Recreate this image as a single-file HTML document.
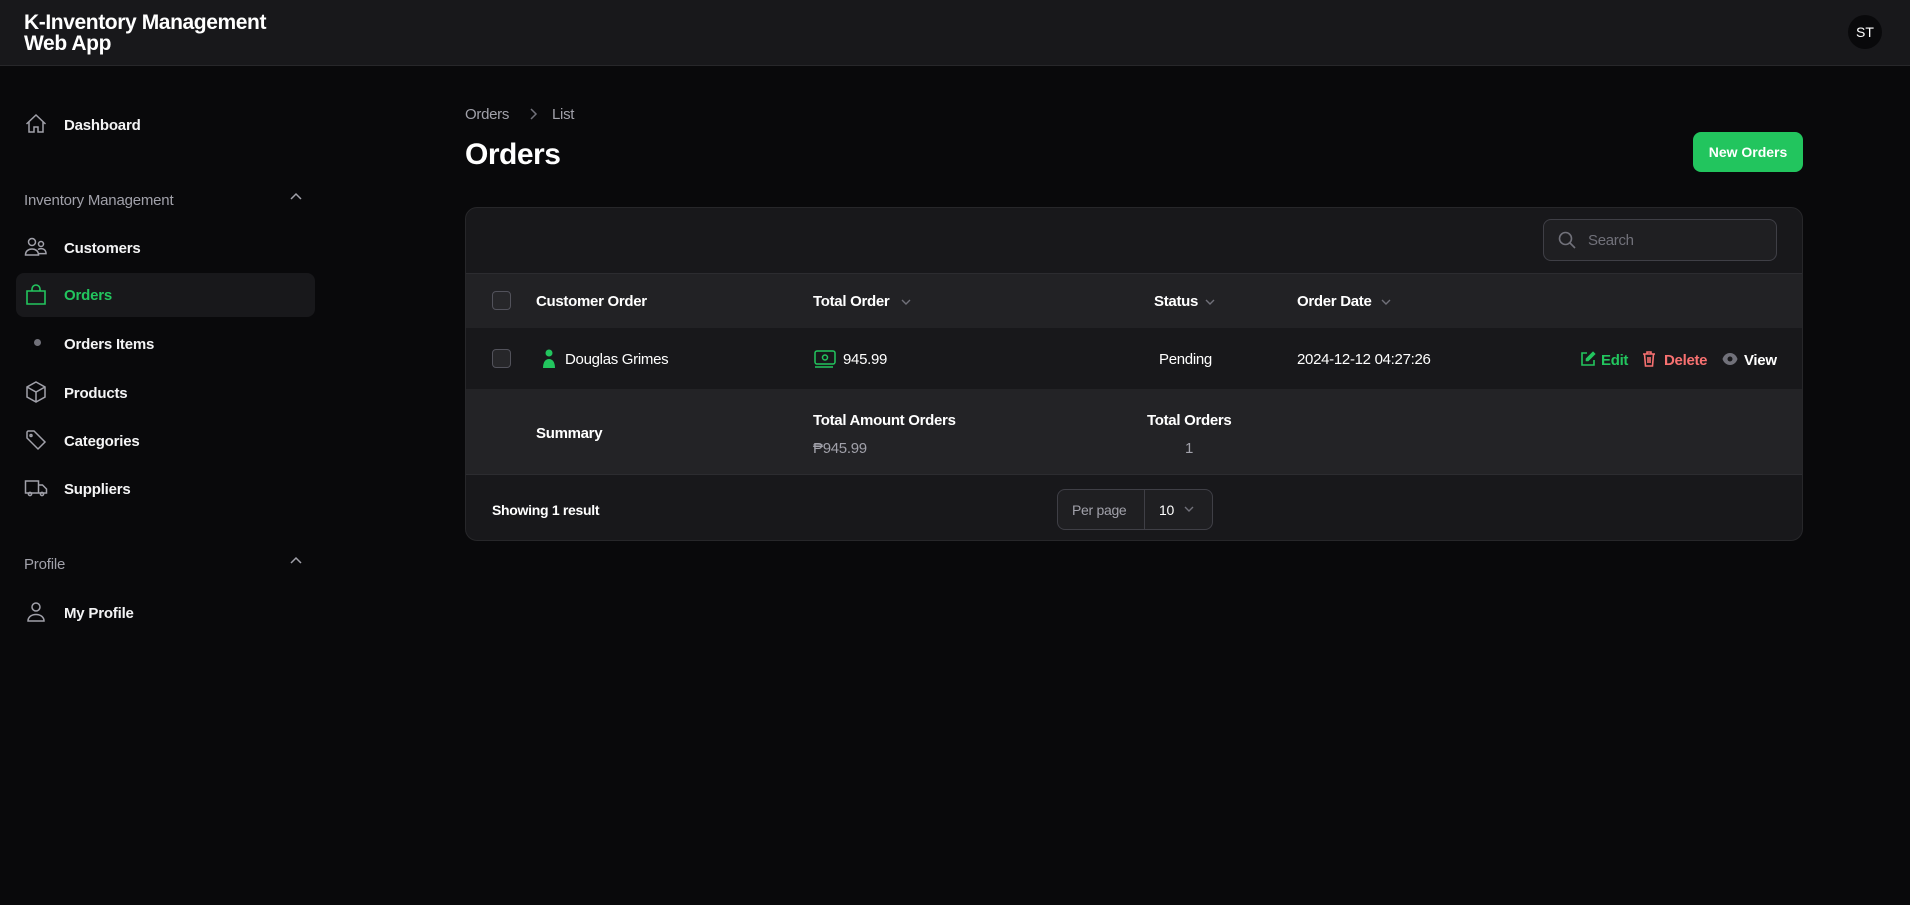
<!DOCTYPE html>
<html><head><meta charset="utf-8"><style>
*{box-sizing:border-box;margin:0;padding:0}
body{width:1910px;height:905px;background:#09090b;font-family:"Liberation Sans",sans-serif;color:#fff;position:relative;overflow:hidden}
.abs{position:absolute}
.top{left:0;top:0;width:1910px;height:66px;background:#18181b;border-bottom:1px solid #27272a}
.title{left:24px;top:12px;font-size:21px;font-weight:700;line-height:21px;letter-spacing:-0.4px}
.av{left:1848px;top:15px;width:34px;height:34px;border-radius:50%;background:#09090b;font-size:14px;text-align:center;line-height:34px}
.nav{left:64px;font-size:15px;font-weight:700;color:#f4f4f5;line-height:18px;letter-spacing:-0.2px}
.grp{left:24px;font-size:15px;color:#a1a1aa;line-height:18px;letter-spacing:-0.2px}
.ic{left:24px;width:24px;height:24px}
svg{display:block}
.card{left:465px;top:207px;width:1338px;height:334px;background:#18181b;border:1px solid #27272a;border-radius:12px;overflow:hidden}
.t{font-size:15px;line-height:18px;letter-spacing:-0.3px}
.b{font-weight:700}
.cb{width:19px;height:19px;border:1px solid #52525b;border-radius:4px;background:#27272a}
</style></head><body>
<div class="abs top"></div>
<div class="abs title">K-Inventory Management<br>Web App</div>
<div class="abs av">ST</div>

<svg class="abs ic" style="top:112px" viewBox="0 0 24 24" fill="none" stroke="#a1a1aa" stroke-width="1.5"><path d="M2.5 12 12 3l9.5 9M5 10v10h5v-5h4v5h5V10"/></svg>
<div class="abs nav" style="top:117px">Dashboard</div>
<div class="abs grp" style="top:192px">Inventory Management</div>
<svg class="abs" style="left:289px;top:192px" width="14" height="10" viewBox="0 0 14 10" fill="none" stroke="#a1a1aa" stroke-width="1.5"><path d="M2 7l5-5 5 5"/></svg>
<svg class="abs ic" style="top:235px" viewBox="0 0 24 24" fill="none" stroke="#a1a1aa" stroke-width="1.5"><circle cx="8" cy="7" r="3.5"/><circle cx="17" cy="9" r="2.5"/><path d="M1.5 20c0-4 3-6 6.5-6s6.5 2 6.5 6zM14 14.5c1-.6 2-.9 3-.9 3 0 5 1.8 5 5h-7"/></svg>
<div class="abs nav" style="top:240px">Customers</div>
<div class="abs" style="left:16px;top:273px;width:299px;height:44px;background:#18181b;border-radius:8px"></div>
<svg class="abs ic" style="top:283px" viewBox="0 0 24 24" fill="none" stroke="#22c55e" stroke-width="1.6"><path d="M3 8h18v13H3zM8 8V6a4 4 0 0 1 8 0v2"/></svg>
<div class="abs nav" style="top:287px;color:#22c55e">Orders</div>
<div class="abs" style="left:34px;top:339px;width:7px;height:7px;border-radius:50%;background:#71717a"></div>
<div class="abs nav" style="top:336px">Orders Items</div>
<svg class="abs ic" style="top:380px" viewBox="0 0 24 24" fill="none" stroke="#a1a1aa" stroke-width="1.5"><path d="M12 2 21 7v10l-9 5-9-5V7zM3 7l9 5 9-5M12 12v10"/></svg>
<div class="abs nav" style="top:385px">Products</div>
<svg class="abs ic" style="top:428px" viewBox="0 0 24 24" fill="none" stroke="#a1a1aa" stroke-width="1.5"><path d="M3 4v6l11 11 7-7L10 3H4z"/><circle cx="7" cy="7.5" r="1"/></svg>
<div class="abs nav" style="top:433px">Categories</div>
<svg class="abs ic" style="top:476px" viewBox="0 0 24 24" fill="none" stroke="#a1a1aa" stroke-width="1.5"><path d="M1.5 5h13v12h-13zM14.5 9h4l4 4v4h-8"/><circle cx="6" cy="18" r="1.6"/><circle cx="18" cy="18" r="1.6"/></svg>
<div class="abs nav" style="top:481px">Suppliers</div>
<div class="abs grp" style="top:556px">Profile</div>
<svg class="abs" style="left:289px;top:556px" width="14" height="10" viewBox="0 0 14 10" fill="none" stroke="#a1a1aa" stroke-width="1.5"><path d="M2 7l5-5 5 5"/></svg>
<svg class="abs ic" style="top:600px" viewBox="0 0 24 24" fill="none" stroke="#a1a1aa" stroke-width="1.5"><circle cx="12" cy="7" r="4"/><path d="M4 21c0-4 3.5-6.5 8-6.5s8 2.5 8 6.5z"/></svg>
<div class="abs nav" style="top:605px">My Profile</div>

<div class="abs t" style="left:465px;top:106px;color:#a1a1aa">Orders</div>
<svg class="abs" style="left:527px;top:107px" width="12" height="14" viewBox="0 0 12 14" fill="none" stroke="#71717a" stroke-width="1.5"><path d="M4 2l5 5-5 5"/></svg>
<div class="abs t" style="left:552px;top:106px;color:#a1a1aa">List</div>
<div class="abs b" style="left:465px;top:138px;font-size:30px;line-height:34px;letter-spacing:-0.5px">Orders</div>
<div class="abs" style="left:1693px;top:132px;width:110px;height:40px;background:#22c55e;border-radius:8px;font-size:14px;font-weight:700;text-align:center;line-height:40px">New Orders</div>

<div class="abs card">
 <div class="abs" style="left:1077px;top:11px;width:234px;height:42px;border:1px solid #3f3f46;border-radius:8px;background:#1f1f22"></div>
 <svg class="abs" style="left:1091px;top:22px" width="20" height="20" viewBox="0 0 20 20" fill="none" stroke="#71717a" stroke-width="1.6"><circle cx="8.5" cy="8.5" r="6"/><path d="M13 13l5 5"/></svg>
 <div class="abs t" style="left:1122px;top:24px;color:#71717a">Search</div>
 <div class="abs" style="left:0;top:65px;width:1338px;height:55px;background:#222225;border-top:1px solid #2c2c30"></div>
 <div class="abs" style="left:0;top:120px;width:1338px;height:61px;background:#18181b"></div>
 <div class="abs" style="left:0;top:181px;width:1338px;height:85px;background:#232326"></div>
 <div class="abs" style="left:0;top:266px;width:1338px;height:1px;background:#2c2c30"></div>
 <div class="abs cb" style="left:26px;top:83px"></div>
 <div class="abs t b" style="left:70px;top:85px">Customer Order</div>
 <div class="abs t b" style="left:347px;top:85px">Total Order</div>
 <svg class="abs" style="left:434px;top:89px" width="12" height="10" viewBox="0 0 12 10" fill="none" stroke="#71717a" stroke-width="1.4"><path d="M2 3l4 4 4-4"/></svg>
 <div class="abs t b" style="left:688px;top:85px">Status</div>
 <svg class="abs" style="left:738px;top:89px" width="12" height="10" viewBox="0 0 12 10" fill="none" stroke="#71717a" stroke-width="1.4"><path d="M2 3l4 4 4-4"/></svg>
 <div class="abs t b" style="left:831px;top:85px">Order Date</div>
 <svg class="abs" style="left:914px;top:89px" width="12" height="10" viewBox="0 0 12 10" fill="none" stroke="#71717a" stroke-width="1.4"><path d="M2 3l4 4 4-4"/></svg>

 <div class="abs cb" style="left:26px;top:141px"></div>
 <svg class="abs" style="left:76px;top:141px" width="14" height="20" viewBox="0 0 14 20" fill="#22c55e"><circle cx="7" cy="4" r="3.5"/><path d="M1 19c0-6 2.5-9 6-9s6 3 6 9z"/></svg>
 <div class="abs t" style="left:99px;top:143px">Douglas Grimes</div>
 <svg class="abs" style="left:348px;top:141px" width="22" height="20" viewBox="0 0 22 20" fill="none" stroke="#22c55e" stroke-width="1.5"><rect x="1" y="2" width="20" height="13" rx="2"/><circle cx="11" cy="8.5" r="2.5"/><path d="M1 18h18"/></svg>
 <div class="abs t" style="left:377px;top:143px">945.99</div>
 <div class="abs t" style="left:693px;top:143px">Pending</div>
 <div class="abs t" style="left:831px;top:143px">2024-12-12 04:27:26</div>
 <svg class="abs" style="left:1114px;top:143px" width="16" height="16" viewBox="0 0 16 16" fill="none" stroke="#22c55e" stroke-width="1.6"><path d="M7 2H2v12h12V9"/><path d="M13 1.5l1.5 1.5L8 9.5H6.5V8z" fill="#22c55e"/></svg>
 <div class="abs t b" style="left:1135px;top:144px;color:#22c55e">Edit</div>
 <svg class="abs" style="left:1176px;top:142px" width="14" height="17" viewBox="0 0 14 17" fill="none" stroke="#f87171" stroke-width="1.6"><path d="M1 4h12M5 4V2h4v2M2.5 4l1 12h7l1-12M6 7v6M8 7v6"/></svg>
 <div class="abs t b" style="left:1198px;top:144px;color:#f87171">Delete</div>
 <svg class="abs" style="left:1256px;top:144px" width="16" height="14" viewBox="0 0 16 14" fill="#71717a"><path d="M8 1C4 1 1.5 4 .5 7c1 3 3.5 6 7.5 6s6.5-3 7.5-6C14.5 4 12 1 8 1z"/><circle cx="8" cy="7" r="2.5" fill="#18181b"/></svg>
 <div class="abs t b" style="left:1278px;top:144px">View</div>

 <div class="abs t b" style="left:70px;top:217px">Summary</div>
 <div class="abs t b" style="left:347px;top:204px">Total Amount Orders</div>
 <div class="abs t" style="left:347px;top:232px;color:#a1a1aa">₱945.99</div>
 <div class="abs t b" style="left:681px;top:204px">Total Orders</div>
 <div class="abs t" style="left:719px;top:232px;color:#a1a1aa">1</div>

 <div class="abs t b" style="left:26px;top:293px;font-size:14px">Showing 1 result</div>
 <div class="abs" style="left:591px;top:281px;width:156px;height:41px;border:1px solid #3f3f46;border-radius:8px;background:#1f1f22"></div>
 <div class="abs" style="left:678px;top:282px;width:1px;height:39px;background:#3f3f46"></div>
 <div class="abs t" style="left:606px;top:293px;color:#a1a1aa;font-size:14px">Per page</div>
 <div class="abs t" style="left:693px;top:293px;font-size:14px">10</div>
 <svg class="abs" style="left:717px;top:296px" width="12" height="10" viewBox="0 0 12 10" fill="none" stroke="#71717a" stroke-width="1.4"><path d="M2 3l4 4 4-4"/></svg>
</div>
</body></html>
